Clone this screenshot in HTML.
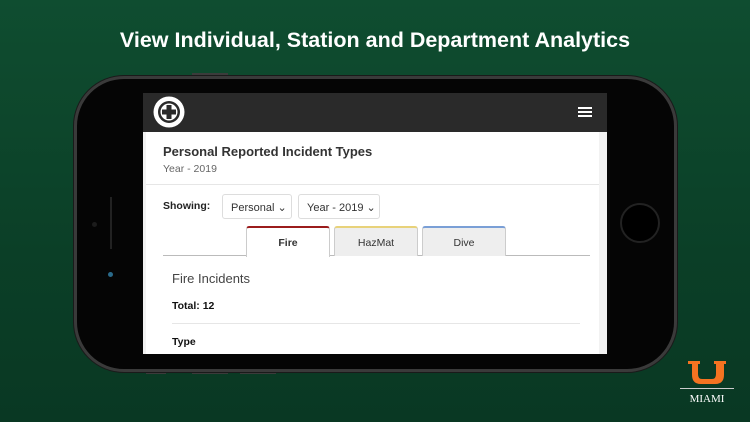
<!DOCTYPE html>
<html><head><style>
*{margin:0;padding:0;box-sizing:border-box}
body{width:750px;height:422px;overflow:hidden;position:relative;font-family:"Liberation Sans",Arial,sans-serif;background:linear-gradient(180deg,#0f4d30 0%,#0b3f27 60%,#093823 100%)}
.title{position:absolute;top:28px;left:0;width:750px;text-align:center;color:#fff;font-weight:bold;font-size:21.5px}
.phone{position:absolute;left:74px;top:76px;width:603px;height:296px;border-radius:50px;background:#050505;border:3px solid #3a3a3a;box-shadow:0 0 0 1px #1a1a1a}
.btn{position:absolute;background:#3b3b3b;height:3px}
.home{position:absolute;left:620px;top:203px;width:40px;height:40px;border-radius:50%;border:2px solid #222;background:#000}
.screen{position:absolute;left:143px;top:93px;width:464px;height:261px;background:#f2f2f2;overflow:hidden}
.nav{height:39px;background:#2a2a2a;position:relative}
.card{position:absolute;left:3px;top:39px;width:453px;height:230px;background:#fff}
.h{position:absolute;left:17px;top:12px;font-size:13px;font-weight:bold;color:#333}
.sub{position:absolute;left:17px;top:31px;font-size:10.5px;color:#666}
.hr{position:absolute;left:0;top:52px;width:453px;height:1px;background:#e6e6e6}
.show{position:absolute;left:17px;top:68px;font-size:10.5px;font-weight:bold;color:#222}
.sel{position:absolute;top:62px;height:25px;border:1px solid #ddd;border-radius:3px;font-size:11px;color:#333;padding:6px 0 0 8px}
.tab{position:absolute;top:94px;height:30px;border:1px solid #ccc;border-bottom:none;border-radius:3px 3px 0 0;font-size:10.5px;text-align:center;padding-top:9px;color:#333;background:#eee}
</style></head><body>
<div class="title">View Individual, Station and Department Analytics</div>
<div class="btn" style="left:192px;top:73px;width:36px"></div>
<div class="btn" style="left:146px;top:371px;width:20px"></div>
<div class="btn" style="left:192px;top:371px;width:36px"></div>
<div class="btn" style="left:240px;top:371px;width:36px"></div>
<div class="phone"></div>
<div style="position:absolute;left:110px;top:197px;width:2px;height:52px;background:#222"></div>
<div style="position:absolute;left:92px;top:222px;width:5px;height:5px;border-radius:50%;background:#1c1c1c"></div>
<div style="position:absolute;left:108px;top:272px;width:5px;height:5px;border-radius:50%;background:#2a6a8a"></div>
<div class="home"></div>
<div class="screen">
 <div class="nav">
  <svg style="position:absolute;left:10px;top:3px" width="32" height="32" viewBox="0 0 32 32"><circle cx="16" cy="16" r="15.5" fill="#fff"/><circle cx="16" cy="16" r="11" fill="#2a2a2a"/><circle cx="16" cy="16" r="8.5" fill="#fff"/><rect x="13.5" y="9" width="5" height="14" fill="#2a2a2a"/><rect x="9" y="13.5" width="14" height="5" fill="#2a2a2a"/></svg>
  <div style="position:absolute;right:15px;top:14px;width:14px;height:2px;background:#fff;box-shadow:0 4px 0 #fff,0 8px 0 #fff"></div>
 </div>
 <div class="card">
  <div class="h">Personal Reported Incident Types</div>
  <div class="sub">Year - 2019</div>
  <div class="hr"></div>
  <div class="show">Showing:</div>
  <div class="sel" style="left:76px;width:70px">Personal &#8964;</div>
  <div class="sel" style="left:152px;width:82px">Year - 2019 &#8964;</div>
  <div style="position:absolute;left:17px;top:123px;width:427px;height:1px;background:#bbb"></div>
  <div class="tab" style="left:100px;width:84px;background:#fff;border-top:2px solid #9b1c1c;font-weight:bold;height:31px">Fire</div>
  <div class="tab" style="left:188px;width:84px;border-top:2px solid #e8d27a">HazMat</div>
  <div class="tab" style="left:276px;width:84px;border-top:2px solid #7a9fd6">Dive</div>
  <div style="position:absolute;left:26px;top:139px;font-size:13px;color:#444">Fire Incidents</div>
  <div style="position:absolute;left:26px;top:168px;font-size:10.5px;font-weight:bold;color:#111">Total: 12</div>
  <div style="position:absolute;left:26px;top:191px;width:408px;height:1px;background:#e6e6e6"></div>
  <div style="position:absolute;left:26px;top:204px;font-size:10.5px;font-weight:bold;color:#111">Type</div>
 </div>
</div>
<svg style="position:absolute;left:686px;top:361px" width="42" height="25" viewBox="0 0 42 25"><path d="M2 0h12v3h-2v10q0 5 4 5h10q4 0 4-5V3h-2V0h12v3h-2v11q0 9-9 9H15q-9 0-9-9V3H2z" fill="#f47321"/></svg>
<div style="position:absolute;left:680px;top:388px;width:54px;height:1px;background:#ccc"></div>
<div style="position:absolute;left:680px;top:393px;width:54px;text-align:center;color:#fff;font-family:'Liberation Serif',serif;font-size:11px">MIAMI</div>
</body></html>
